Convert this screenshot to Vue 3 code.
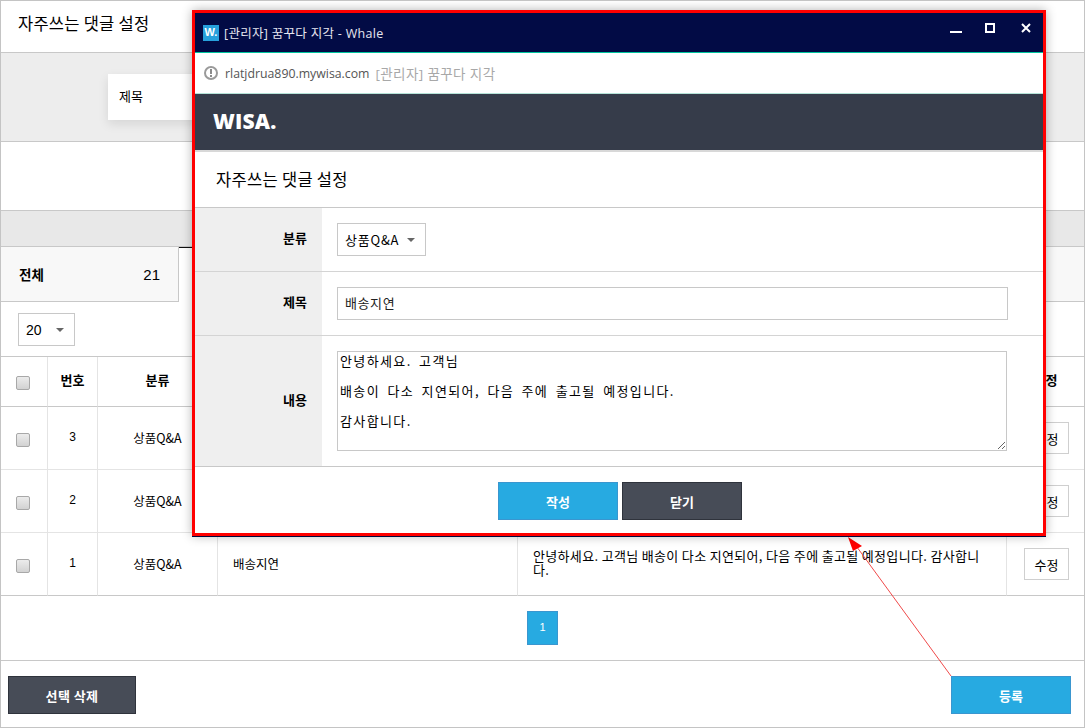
<script setup>
const body = '안녕하세요. 고객님 배송이 다소 지연되어, 다음 주에 출고될 예정입니다. 감사합니다.'
const rows = [
  { no: 3, title: '', body: '' },
  { no: 2, title: '', body: '' },
  { no: 1, title: '배송지연', body },
]
const memo = '안녕하세요. 고객님\n\n배송이 다소 지연되어, 다음 주에 출고될 예정입니다.\n\n감사합니다.'
</script>

<template>
  <div class="page">
    <header class="head">자주쓰는 댓글 설정</header>
    <section class="search">
      <div class="search-card">제목</div>
    </section>
    <section class="blank"></section>
    <section class="strip"></section>
    <nav class="tabs">
      <div class="tab"><b>전체</b><span>21</span></div>
      <div class="tab-active"></div>
    </nav>
    <div class="tools">
      <div class="select small"><span>20</span><i class="caret"></i></div>
    </div>
    <table class="list">
      <colgroup>
        <col class="c1" /><col class="c2" /><col class="c3" /><col class="c4" /><col class="c5" /><col class="c6" />
      </colgroup>
      <thead>
        <tr>
          <th><input type="checkbox" class="check" /></th>
          <th>번호</th>
          <th>분류</th>
          <th>제목</th>
          <th>내용</th>
          <th>수정</th>
        </tr>
      </thead>
      <tbody>
        <tr v-for="r in rows" :key="r.no">
          <td><input type="checkbox" class="check" /></td>
          <td class="num">{{ r.no }}</td>
          <td>상품Q&amp;A</td>
          <td class="left">{{ r.title }}</td>
          <td class="left text">{{ r.body }}</td>
          <td><button class="edit">수정</button></td>
        </tr>
      </tbody>
    </table>
    <div class="paging"><span class="page-no">1</span></div>
    <footer class="foot">
      <button class="btn dark wide">선택 삭제</button>
      <button class="btn blue">등록</button>
    </footer>

    <svg class="arrow" width="120" height="150" viewBox="0 0 120 150">
      <line x1="111" y1="141" x2="14" y2="8" stroke="#f04a4a" stroke-width="1" />
      <polygon points="8,2 22,11 13,16" fill="#ff0000" />
    </svg>

    <div class="popup">
      <div class="titlebar">
        <span class="favicon">W.</span>
        <span class="wintitle">[관리자] 꿈꾸다 지각 - Whale</span>
        <svg class="winctl" width="81" height="12" viewBox="0 0 81 12">
          <rect x="0" y="9" width="12" height="2" fill="#fff" />
          <rect x="36" y="2" width="8" height="8" fill="none" stroke="#fff" stroke-width="2" />
          <path d="M72 2 L80 10 M80 2 L72 10" stroke="#fff" stroke-width="2" fill="none" />
        </svg>
      </div>
      <div class="address">
        <svg width="14" height="14" viewBox="0 0 14 14">
          <circle cx="7" cy="7" r="6" fill="none" stroke="#9a9a9a" stroke-width="2" />
          <rect x="6" y="3" width="2" height="5" fill="#8a8a8a" />
          <rect x="6" y="9" width="2" height="2" fill="#8a8a8a" />
        </svg>
        <span class="url">rlatjdrua890.mywisa.com</span>
        <span class="page-title">[관리자] 꿈꾸다 지각</span>
      </div>
      <div class="brand">WISA.</div>
      <div class="sub">자주쓰는 댓글 설정</div>
      <div class="frow r1">
        <label>분류</label>
        <div class="fval"><div class="select cat"><span>상품Q&amp;A</span><i class="caret"></i></div></div>
      </div>
      <div class="frow r2">
        <label>제목</label>
        <div class="fval"><input class="field" value="배송지연" /></div>
      </div>
      <div class="frow r3">
        <label>내용</label>
        <div class="fval"><textarea class="memo" :value="memo"></textarea></div>
      </div>
      <div class="pop-foot">
        <button class="btn blue">작성</button>
        <button class="btn dark">닫기</button>
      </div>
    </div>
  </div>
</template>

<style>
html, body { margin: 0; padding: 0; background: #fff; overflow: hidden; }
</style>

<style scoped>
* { box-sizing: border-box; }
.page {
  position: relative;
  width: 1085px;
  height: 728px;
  border: 1px solid #c4c4c4;
  background: #fff;
  color: #000;
  font-family: "Noto Sans CJK KR", "Noto Sans", sans-serif;
  font-size: 13px;
  overflow: hidden;
}
.head {
  height: 52px;
  padding: 0 0 0 17px;
  line-height: 45px;
  font-size: 16.5px;
  letter-spacing: .25px;
  border-bottom: 1px solid #c8c8c8;
}
.search {
  height: 89px;
  background: #ededed;
  border-bottom: 1px solid #c8c8c8;
  display: flex;
  justify-content: center;
  padding-top: 21px;
}
.search-card {
  width: 869px;
  height: 46px;
  background: #fff;
  box-shadow: 0 4px 10px rgba(0,0,0,.1);
  padding-left: 11px;
  line-height: 43px;
}
.blank { height: 69px; border-bottom: 1px solid #c8c8c8; }
.strip { height: 36px; background: #e8e8e8; border-bottom: 1px solid #c8c8c8; }
.tabs {
  height: 55px;
  background: #f8f8f8;
  border-bottom: 1px solid #c8c8c8;
  display: flex;
}
.tab {
  width: 178px;
  height: 54px;
  border-right: 1px solid #c8c8c8;
  display: flex;
  align-items: center;
  justify-content: space-between;
  padding: 0 18px 0 18px;
  font-size: 14px;
}
.tab b { font-weight: 700; font-size: 13.5px; }
.tab span { font-size: 15px; font-family: "Liberation Sans", sans-serif; }
.tab-active { width: 500px; height: 55px; background: #fff; border-top: 1px solid #111; }
.tools { height: 54px; padding: 11px 0 0 17px; }
.select {
  display: flex;
  align-items: center;
  justify-content: space-between;
  border: 1px solid #c8c8c8;
  background: #fff;
  height: 33px;
}
.small { width: 57px; padding: 0 10px 0 7px; }
.small span { font-family: "Liberation Sans", sans-serif; font-size: 14px; }
.cat { width: 89px; padding: 0 10px 0 7px; letter-spacing: .8px; }
.caret {
  width: 0;
  height: 0;
  border-left: 4px solid transparent;
  border-right: 4px solid transparent;
  border-top: 4px solid #666;
}
.list {
  width: 1083px;
  table-layout: fixed;
  border-collapse: separate;
  border-spacing: 0;
  border-top: 1px solid #c8c8c8;
}
.c1 { width: 47px; }
.c2 { width: 50px; }
.c3 { width: 120px; }
.c4 { width: 300px; }
.c5 { width: 489px; }
.c6 { width: 77px; }
th, td {
  padding: 0;
  text-align: center;
  vertical-align: middle;
  border-right: 1px solid #e4e4e4;
  border-bottom: 1px solid #e4e4e4;
}
th:last-child, td:last-child { border-right: 0; }
th { height: 50px; font-weight: 700; border-bottom-color: #c8c8c8; padding-bottom: 4px; }
td { height: 63px; font-size: 12.5px; padding-bottom: 2px; }
tbody tr:last-child td { border-bottom-color: #c8c8c8; }
.num { font-family: "Liberation Sans", sans-serif; font-size: 12px; }
.left { text-align: left; padding-left: 15px; }
.text { padding-right: 20px; line-height: 14px; word-break: break-all; font-size: 13px; letter-spacing: .33px; }
.check {
  appearance: none;
  display: block;
  width: 14px;
  height: 14px;
  margin: 6px 0 0 15px;
  border: 1px solid #a8a8a8;
  border-radius: 2px;
  background: linear-gradient(#ececec, #d2d2d2);
}
.edit {
  width: 45px;
  height: 32px;
  margin: 2px 0 0 17px;
  padding: 0;
  display: block;
  border: 1px solid #cfcfcf;
  background: #fff;
  font: inherit;
  font-size: 13px;
  color: #000;
}
.paging {
  height: 65px;
  border-bottom: 1px solid #c8c8c8;
  display: flex;
  justify-content: center;
  padding-top: 15px;
}
.page-no {
  width: 31px;
  height: 34px;
  background: #27aae1;
  border: 1px solid #3a96cf;
  color: #fff;
  font-family: "Liberation Sans", sans-serif;
  font-size: 11px;
  text-align: center;
  line-height: 31px;
}
.foot {
  display: flex;
  justify-content: space-between;
  padding: 15px 13px 0 7px;
}
.btn {
  width: 120px;
  height: 38px;
  padding: 0;
  border: 1px solid;
  color: #fff;
  font: inherit;
  font-size: 13px;
  font-weight: 700;
}
.wide { width: 128px; letter-spacing: .4px; }
.dark { background: #474c57; border-color: #2f333c; }
.blue { background: #27aae1; border-color: #3a96cf; }
.arrow { position: absolute; left: 839px; top: 534px; }
.popup {
  position: absolute;
  left: 191px;
  top: 9px;
  width: 854px;
  height: 526px;
  background: #fff;
  border: 3px solid #ff0000;
  box-shadow: 0 1px 0 #000a3d, 0 0 10px rgba(0,0,0,.3);
  display: flex;
  flex-direction: column;
}
.titlebar {
  height: 40px;
  flex: none;
  background: #020b45;
  border-bottom: 1px solid #00c5a0;
  display: flex;
  align-items: center;
  padding: 0 12px 0 8px;
  color: #e6e6f0;
  font-size: 13px;
}
.favicon {
  width: 16px;
  height: 16px;
  background: #27a0dc;
  color: #fff;
  font-family: "Liberation Sans", sans-serif;
  font-weight: 700;
  font-size: 11px;
  line-height: 15px;
  text-align: center;
  margin-right: 5px;
}
.wintitle { font-family: "Open Sans", "Noto Sans CJK KR", sans-serif; font-size: 12.5px; letter-spacing: .3px; }
.winctl { margin-left: auto; margin-top: -9px; }
.address {
  height: 41px;
  flex: none;
  border-bottom: 1px solid #b5e3d8;
  display: flex;
  align-items: center;
  padding-left: 9px;
  font-family: "Open Sans", "Noto Sans CJK KR", sans-serif;
  font-size: 12.3px;
}
.url { color: #555; margin-left: 7px; }
.page-title { color: #a8a8a8; margin-left: 6px; font-size: 13.5px; letter-spacing: .4px; }
.brand {
  height: 58px;
  flex: none;
  background: #363c4a;
  border-bottom: 2px solid #d8d8d8;
  color: #fff;
  font-family: "Open Sans", sans-serif;
  font-weight: 800;
  font-size: 21px;
  line-height: 55px;
  padding-left: 18px;
  letter-spacing: .2px;
}
.sub {
  height: 56px;
  flex: none;
  border-bottom: 1px solid #c8c8c8;
  padding-left: 21px;
  line-height: 55px;
  font-size: 16.5px;
  letter-spacing: .3px;
}
.frow { display: flex; flex: none; border-bottom: 1px solid #c8c8c8; }
.r1, .r2 { height: 64px; border-bottom-color: #d4d4d4; }
.r3 { height: 131px; }
.frow label {
  width: 127px;
  background: #efefef;
  padding: 0 15px 4px 0;
  font-weight: 700;
  display: flex;
  align-items: center;
  justify-content: flex-end;
}
.fval { flex: 1; padding: 15px 0 0 15px; }
.field {
  display: block;
  width: 671px;
  height: 33px;
  border: 1px solid #c8c8c8;
  padding: 0 7px 2px;
  font: inherit;
  letter-spacing: .6px;
  color: #222;
  outline: 0;
}
.memo {
  display: block;
  width: 670px;
  height: 100px;
  border: 1px solid #c8c8c8;
  padding: 1px 2px;
  font: inherit;
  font-size: 13px;
  line-height: 15px;
  letter-spacing: 1.37px;
  word-spacing: 3.2px;
  color: #000;
  outline: 0;
  overflow: hidden;
}
.pop-foot {
  display: flex;
  justify-content: center;
  gap: 4px;
  padding: 15px 0 0 2px;
}
</style>
